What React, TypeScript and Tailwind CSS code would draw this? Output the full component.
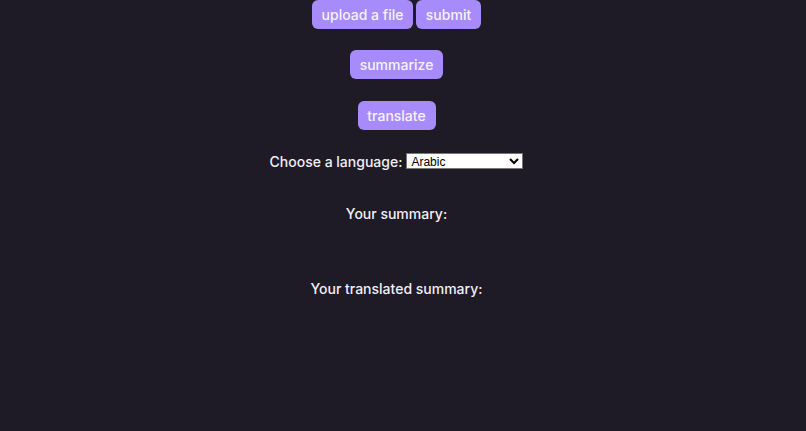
export default function App() {
  const btn =
    "rounded-md bg-[#a78bfa] h-[29px] text-[14px] leading-none text-[#f5f3ff] whitespace-nowrap font-medium";
  return (
    <div className="min-h-[431px] w-full pr-[13px] bg-[#1e1a26] text-[#f1eef6] font-['Inter','Noto_Sans',sans-serif] flex flex-col items-center">
      <div className="flex gap-[3px]">
        <button className={`${btn} w-[101px]`}>upload a file</button>
        <button className={`${btn} w-[65px]`}>submit</button>
      </div>
      <button className={`${btn} w-[93px] mt-[21px]`}>summarize</button>
      <button className={`${btn} w-[78px] mt-[22px]`}>translate</button>
      <div className="mt-[23px] flex items-center gap-[4px] text-[14px] font-medium h-[16px] whitespace-nowrap">
        <label htmlFor="lang">Choose a language:</label>
        <select
          id="lang"
          className="w-[117px] h-[16px] bg-white text-black text-[12px] font-normal font-['Liberation_Sans',sans-serif] border border-[#767676] p-0 leading-none"
          style={{ appearance: "auto" }}
        >
          <option>Arabic</option>
          <option>French</option>
          <option>Spanish</option>
        </select>
      </div>
      <h3 className="mt-[35px] text-[14px] font-medium leading-[20px]">Your summary:</h3>
      <h3 className="mt-[55px] text-[14px] font-medium leading-[20px]">Your translated summary:</h3>
    </div>
  );
}
